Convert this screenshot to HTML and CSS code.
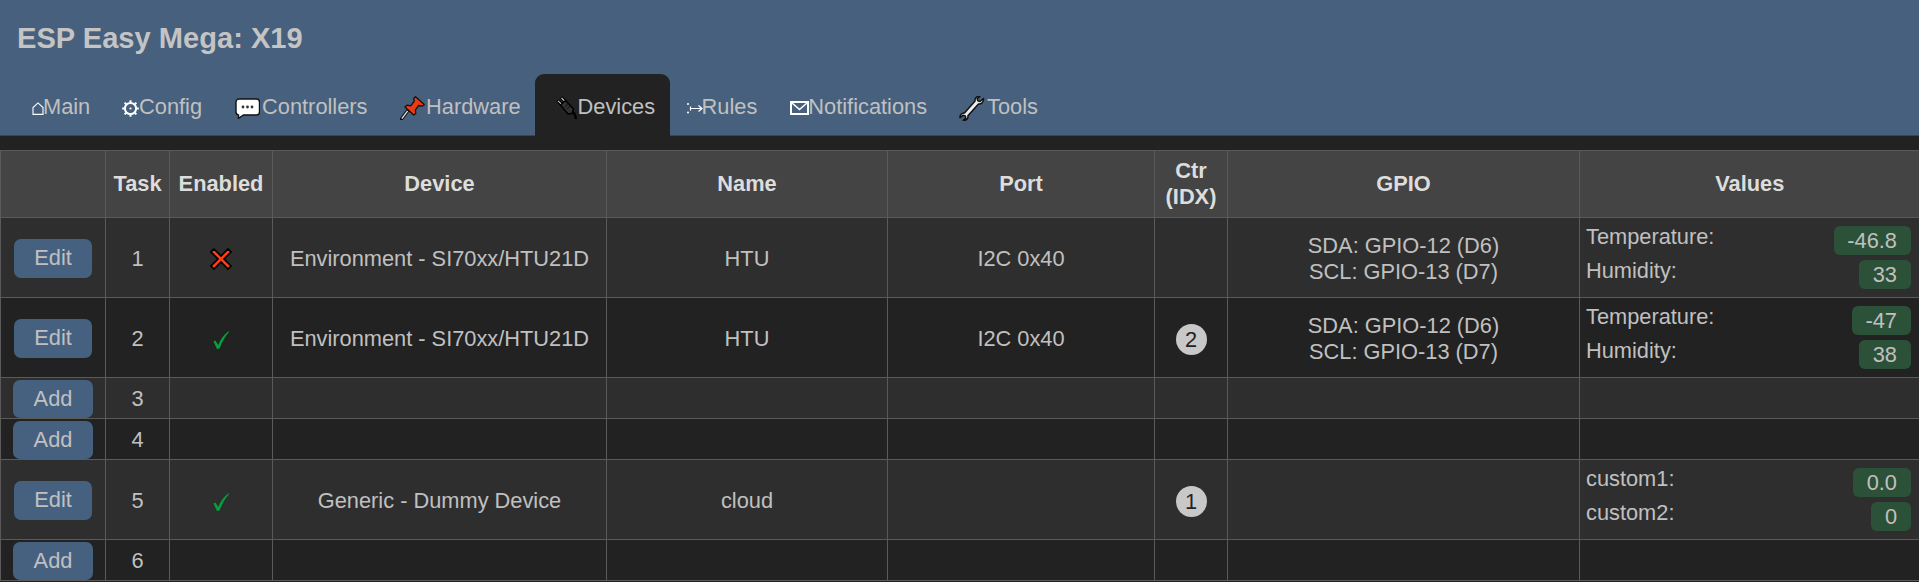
FILE: index.html
```html
<!DOCTYPE html>
<html lang="en">
<head>
<meta charset="utf-8">
<title>ESP Easy Mega: X19</title>
<link rel="stylesheet" href="styles.css">
</head>
<body>
<header class="head">
  <h1 class="title">ESP Easy Mega: X19</h1>
  <nav class="menu">
    <a class="tab"><svg class="ic ic-home" viewBox="0 0 12 13"><path d="M1 12.4V5.6L6 .9l5 4.7v6.8z" fill="none" stroke="#fff" stroke-width="1.1"/></svg>Main</a>
    <a class="tab"><svg class="ic ic-gear" viewBox="0 0 17 17"><circle cx="8.5" cy="8.5" r="5.6" fill="none" stroke="#fff" stroke-width="2"/><circle cx="8.5" cy="8.5" r="1.1" fill="#fff"/><path d="M8.5 .2v2.4M8.5 14.4v2.4M.2 8.5h2.400M14.400 8.500h2.400M2.600 2.600l1.700 1.700M12.700 12.700l1.700 1.700M14.400 2.600l-1.700 1.700M4.300 12.700l-1.700 1.700" stroke="#fff" stroke-width="2"/></svg>Config</a>
    <a class="tab"><svg class="ic ic-chat" viewBox="0 0 25 21"><path d="M4 1h17.500a3 3 0 0 1 3 3v10a3 3 0 0 1-3 3H8.500L3.500 20.300V17A3 3 0 0 1 1 14V4a3 3 0 0 1 3-3z" fill="#fff" stroke="#111" stroke-width="1.400"/><circle cx="8" cy="9" r="1.400" fill="#333"/><circle cx="12.500" cy="9" r="1.400" fill="#333"/><circle cx="17" cy="9" r="1.400" fill="#333"/></svg>Controllers</a>
    <a class="tab"><svg class="ic ic-pin" viewBox="0 0 25 24"><path d="M1.500 23l6-8" stroke="#111" stroke-width="3.400" stroke-linecap="round"/><path d="M1.800 22.600l5.800-7.800" stroke="#ddd" stroke-width="1.400"/><path d="M15.500.8l8.700 7.800-2.200 1.600-3.200-.7-3.400 4.400.3 3.700-2 1.400L4.900 10.900l2.200-1.700 3.600.6 3.600-4.700-.6-2.700z" fill="#ee3a12" stroke="#111" stroke-width="1.300" stroke-linejoin="round"/></svg>Hardware</a>
    <a class="tab tab-on"><svg class="ic ic-plug" viewBox="0 0 23 24"><path d="M16 15c3 2 4.500 3 4.800 8" fill="none" stroke="#000" stroke-width="2.400"/><path d="M2.500 4.500L7 9M6 1.500L11 6" stroke="#000" stroke-width="3.200"/><path d="M3 4.800l4 3.800M6.500 2l4 3.800" stroke="#ccc" stroke-width="1.100"/><path d="M5.500 9l5-4.500 8 8.500-1.500 4.500-4 .5z" fill="#333" stroke="#000" stroke-width="1.500" stroke-linejoin="round"/><path d="M10 11l3-3M12 13l3-3" stroke="#111" stroke-width="1"/></svg>Devices</a>
    <a class="tab"><svg class="ic ic-rules" viewBox="0 0 16 12"><circle cx="1" cy="2" r="1" fill="#fff"/><circle cx="1" cy="10.500" r="1" fill="#fff"/><path d="M3.500 6.500h11M11.500 3.500l3.500 3-3.500 3M3.500 4.500v4" fill="none" stroke="#fff" stroke-width="1.200"/></svg>Rules</a>
    <a class="tab"><svg class="ic ic-mail" viewBox="0 0 19 14"><rect x="1" y="1" width="17" height="12" fill="none" stroke="#fff" stroke-width="2"/><path d="M1.500 1.500l8 7 8-7" fill="none" stroke="#fff" stroke-width="1.600"/></svg>Notifications</a>
    <a class="tab"><svg class="ic ic-tool" viewBox="0 0 26 25"><path d="M24.500 2.500l-3.500 3-2.200-.6-.6-2.200 2.600-2.300c-3-.6-5.300 1.800-4.700 4.700L5.500 17c-2.500-.2-4.800 2-4.500 4.700l3-2.400 2.300.7.500 2.100-2.600 2.300c3 .5 5.300-1.800 4.700-4.600L19.500 7.900c2.800.5 5.300-2 5-5.400z" fill="#eee" stroke="#111" stroke-width="1.500" stroke-linejoin="round"/></svg>Tools</a>
  </nav>
</header>
<main class="page">
  <table class="grid">
    <colgroup>
      <col class="c-act"><col class="c-task"><col class="c-en"><col class="c-dev"><col class="c-name"><col class="c-port"><col class="c-ctr"><col class="c-gpio"><col class="c-val">
    </colgroup>
    <thead>
      <tr class="r-head"><th></th><th>Task</th><th>Enabled</th><th>Device</th><th>Name</th><th>Port</th><th>Ctr<br>(IDX)</th><th>GPIO</th><th>Values</th></tr>
    </thead>
    <tbody>
      <tr class="r-tall">
        <td><a class="btn">Edit</a></td><td>1</td>
        <td><svg class="mark-x" viewBox="0 0 24 24"><path d="M5 2l7 7 7-7 3 3-7 7 7 7-3 3-7-7-7 7-3-3 7-7-7-7z" fill="#ff3d13" stroke="#000" stroke-width="1.700" stroke-linejoin="miter"/></svg></td>
        <td>Environment - SI70xx/HTU21D</td><td>HTU</td><td>I2C 0x40</td><td></td>
        <td>SDA: GPIO-12 (D6)<br>SCL: GPIO-13 (D7)</td>
        <td class="vals"><div class="kv"><span class="k">Temperature:</span><span class="v">-46.8</span></div><div class="kv"><span class="k">Humidity:</span><span class="v">33</span></div></td>
      </tr>
      <tr class="r-tall">
        <td><a class="btn">Edit</a></td><td>2</td>
        <td><svg class="mark-ok" viewBox="0 0 16 18"><path d="M0.500 10.500l1.800-1 3 4.500C7.500 8.500 10.500 4 15.500.3L16 1C12 5.500 9 11 6.500 17.500l-2.500.5z" fill="#00a33c"/></svg></td>
        <td>Environment - SI70xx/HTU21D</td><td>HTU</td><td>I2C 0x40</td><td><span class="dot">2</span></td>
        <td>SDA: GPIO-12 (D6)<br>SCL: GPIO-13 (D7)</td>
        <td class="vals"><div class="kv"><span class="k">Temperature:</span><span class="v">-47</span></div><div class="kv"><span class="k">Humidity:</span><span class="v">38</span></div></td>
      </tr>
      <tr class="r-low"><td><a class="btn btn-add">Add</a></td><td>3</td><td></td><td></td><td></td><td></td><td></td><td></td><td></td></tr>
      <tr class="r-low"><td><a class="btn btn-add">Add</a></td><td>4</td><td></td><td></td><td></td><td></td><td></td><td></td><td></td></tr>
      <tr class="r-tall">
        <td><a class="btn">Edit</a></td><td>5</td>
        <td><svg class="mark-ok" viewBox="0 0 16 18"><path d="M0.500 10.500l1.800-1 3 4.500C7.500 8.500 10.500 4 15.500.3L16 1C12 5.500 9 11 6.500 17.500l-2.500.5z" fill="#00a33c"/></svg></td>
        <td>Generic - Dummy Device</td><td>cloud</td><td></td><td><span class="dot">1</span></td><td></td>
        <td class="vals"><div class="kv"><span class="k">custom1:</span><span class="v">0.0</span></div><div class="kv"><span class="k">custom2:</span><span class="v">0</span></div></td>
      </tr>
      <tr class="r-low"><td><a class="btn btn-add">Add</a></td><td>6</td><td></td><td></td><td></td><td></td><td></td><td></td><td></td></tr>
    </tbody>
  </table>
</main>
</body>
</html>
```

FILE: styles.css
```css
html, body {
  margin: 0;
  padding: 0;
  height: 582px;
  overflow: hidden;
  background: #222;
  color: #c0c0c0;
  font-family: "Liberation Sans", Arial, sans-serif;
  font-size: 21.8px;
  line-height: 26px;
}

.head {
  background: #46607e;
  border-bottom: 1px solid #444;
  height: 135px;
}

.title {
  margin: 0;
  padding: 1px 0 0 17px;
  height: 73px;
  line-height: 74px;
  font-size: 29.1px;
  font-weight: bold;
  color: #c4c4c4;
}

.menu {
  display: flex;
  height: 62px;
  padding-left: 15.5px;
}

.tab {
  display: flex;
  align-items: center;
  height: 62px;
  padding: 4px 16.5px 0;
  color: #c0c0c0;
  border-radius: 9px 9px 0 0;
  box-sizing: border-box;
}

.tab-on {
  background: #222;
  margin-left: -2.5px;
  padding-left: 20px;
  padding-right: 15px;
}

.ic { flex: none; display: block; margin-top: 2px; }
.ic-home { width: 12px; height: 13px; margin-right: -1px; }
.ic-gear { width: 17px; height: 17px; margin-left: -1.2px; }
.ic-chat { width: 25px; height: 21px; margin-right: 2px; }
.ic-pin { width: 25px; height: 24px; margin-right: .6px; }
.ic-plug { width: 23px; height: 24px; }
.ic-rules { width: 16px; height: 12px; margin-right: -1px; }
.ic-mail { width: 19px; height: 14px; margin-right: -1px; }
.ic-tool { width: 26px; height: 25px; margin-left: -1px; margin-right: 2px; }

.page { padding-top: 14px; }

.grid {
  width: 1919px;
  table-layout: fixed;
  border-collapse: collapse;
}

.c-act { width: 105px; }
.c-task { width: 64px; }
.c-en { width: 103px; }
.c-dev { width: 334px; }
.c-name { width: 281px; }
.c-port { width: 267px; }
.c-ctr { width: 73px; }
.c-gpio { width: 352px; }
.c-val { width: 340px; }

.grid th, .grid td {
  border: 1px solid #5a5a5a;
  padding: 0;
  text-align: center;
  vertical-align: middle;
}

.grid td { padding-top: 2px; }
.grid .r-low td { padding-top: 1px; }

.grid th:last-child, .grid td:last-child { border-right: 0; }

.grid th {
  background: #444;
  color: #ddd;
  font-weight: bold;
}

.r-head { height: 67px; }
.r-tall { height: 80px; }
.r-low { height: 41px; }

tbody tr:nth-child(odd) td { background: #2e2e2e; }
tbody tr:nth-child(even) td { background: #222; }

.btn {
  display: inline-block;
  width: 78px;
  height: 39px;
  line-height: 38px;
  background: #466180;
  border-radius: 7px;
  color: #c0c0c0;
  vertical-align: middle;
}

.btn-add { width: 80px; height: 38px; }

.mark-x { width: 24px; height: 24px; display: block; margin: 1px auto 0; }
.mark-ok { width: 16px; height: 18px; display: block; margin: 2px auto 0; }

.dot {
  display: inline-block;
  width: 31px;
  height: 31px;
  line-height: 31px;
  margin-top: 2px;
  border-radius: 50%;
  background: #c8c8c8;
  color: #222;
  vertical-align: middle;
}

.grid td.vals {
  padding: 0 9px 0 6px;
  text-align: left;
}

.kv {
  display: flex;
  justify-content: space-between;
  align-items: flex-start;
  height: 29px;
}

.kv + .kv { margin-top: 5px; }

.k { margin-top: -2px; }

.v {
  height: 29px;
  line-height: 29px;
  padding: 0 13.5px;
  box-sizing: border-box;
  background: #2b5239;
  border-radius: 6px;
}
```
